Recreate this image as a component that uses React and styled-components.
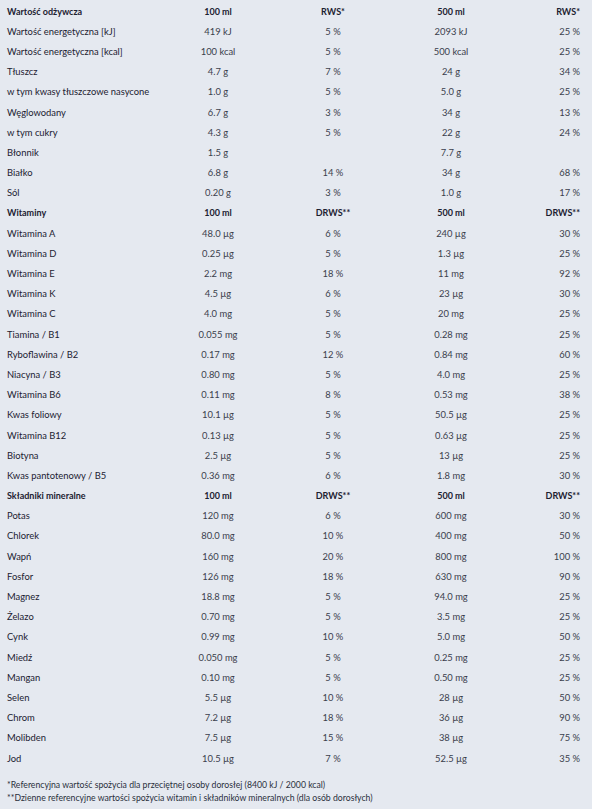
import styled, { createGlobalStyle } from "styled-components";

const GlobalStyle = createGlobalStyle`
  html, body {
    margin: 0;
    padding: 0;
    background: #e5e9f0;
  }
  body {
    font-family: "Lato", "Liberation Sans", sans-serif;
    color: #1c2130;
  }
`;

const sections = [
  {
    head: ["Wartość odżywcza", "100 ml", "RWS*", "500 ml", "RWS*"],
    rows: [
      ["Wartość energetyczna [kJ]", "419 kJ", "5 %", "2093 kJ", "25 %"],
      ["Wartość energetyczna [kcal]", "100 kcal", "5 %", "500 kcal", "25 %"],
      ["Tłuszcz", "4.7 g", "7 %", "24 g", "34 %"],
      ["w tym kwasy tłuszczowe nasycone", "1.0 g", "5 %", "5.0 g", "25 %"],
      ["Węglowodany", "6.7 g", "3 %", "34 g", "13 %"],
      ["w tym cukry", "4.3 g", "5 %", "22 g", "24 %"],
      ["Błonnik", "1.5 g", "", "7.7 g", ""],
      ["Białko", "6.8 g", "14 %", "34 g", "68 %"],
      ["Sól", "0.20 g", "3 %", "1.0 g", "17 %"],
    ],
  },
  {
    head: ["Witaminy", "100 ml", "DRWS**", "500 ml", "DRWS**"],
    rows: [
      ["Witamina A", "48.0 µg", "6 %", "240 µg", "30 %"],
      ["Witamina D", "0.25 µg", "5 %", "1.3 µg", "25 %"],
      ["Witamina E", "2.2 mg", "18 %", "11 mg", "92 %"],
      ["Witamina K", "4.5 µg", "6 %", "23 µg", "30 %"],
      ["Witamina C", "4.0 mg", "5 %", "20 mg", "25 %"],
      ["Tiamina / B1", "0.055 mg", "5 %", "0.28 mg", "25 %"],
      ["Ryboflawina / B2", "0.17 mg", "12 %", "0.84 mg", "60 %"],
      ["Niacyna / B3", "0.80 mg", "5 %", "4.0 mg", "25 %"],
      ["Witamina B6", "0.11 mg", "8 %", "0.53 mg", "38 %"],
      ["Kwas foliowy", "10.1 µg", "5 %", "50.5 µg", "25 %"],
      ["Witamina B12", "0.13 µg", "5 %", "0.63 µg", "25 %"],
      ["Biotyna", "2.5 µg", "5 %", "13 µg", "25 %"],
      ["Kwas pantotenowy / B5", "0.36 mg", "6 %", "1.8 mg", "30 %"],
    ],
  },
  {
    head: ["Składniki mineralne", "100 ml", "DRWS**", "500 ml", "DRWS**"],
    rows: [
      ["Potas", "120 mg", "6 %", "600 mg", "30 %"],
      ["Chlorek", "80.0 mg", "10 %", "400 mg", "50 %"],
      ["Wapń", "160 mg", "20 %", "800 mg", "100 %"],
      ["Fosfor", "126 mg", "18 %", "630 mg", "90 %"],
      ["Magnez", "18.8 mg", "5 %", "94.0 mg", "25 %"],
      ["Żelazo", "0.70 mg", "5 %", "3.5 mg", "25 %"],
      ["Cynk", "0.99 mg", "10 %", "5.0 mg", "50 %"],
      ["Miedź", "0.050 mg", "5 %", "0.25 mg", "25 %"],
      ["Mangan", "0.10 mg", "5 %", "0.50 mg", "25 %"],
      ["Selen", "5.5 µg", "10 %", "28 µg", "50 %"],
      ["Chrom", "7.2 µg", "18 %", "36 µg", "90 %"],
      ["Molibden", "7.5 µg", "15 %", "38 µg", "75 %"],
      ["Jod", "10.5 µg", "7 %", "52.5 µg", "35 %"],
    ],
  },
];

const Page = styled.div`
  padding: 1px 12px 0 7px;
`;

const Table = styled.div`
  display: flex;
  flex-direction: column;
`;

const Row = styled.div`
  display: grid;
  grid-template-columns: 161px 100px 130px 106px 1fr;
  align-items: center;
  height: 20.2px;
  font-size: ${({ head }) => (head ? "9px" : "9.4px")};
  font-weight: ${({ head }) => (head ? 700 : 400)};
`;

const Label = styled.span`
  color: #1c2130;
  white-space: nowrap;
`;

const Cell = styled.span`
  text-align: ${({ align }) => align || "center"};
  color: ${({ head }) => (head ? "#1c2130" : "#3a404c")};
  white-space: nowrap;
`;

const Notes = styled.div`
  margin-top: 10px;
  font-size: 8.7px;
  line-height: 13px;
  color: #2a303c;
`;

const DataRow = ({ cells, head }) => (
  <Row head={head}>
    <Label>{cells[0]}</Label>
    <Cell head={head}>{cells[1]}</Cell>
    <Cell head={head}>{cells[2]}</Cell>
    <Cell head={head}>{cells[3]}</Cell>
    <Cell head={head} align="right">{cells[4]}</Cell>
  </Row>
);

export default function App() {
  return (
    <>
      <GlobalStyle />
      <Page>
        <Table>
          {sections.map((s) => (
            <div key={s.head[0]}>
              <DataRow cells={s.head} head />
              {s.rows.map((r) => (
                <DataRow key={r[0]} cells={r} />
              ))}
            </div>
          ))}
        </Table>
        <Notes>
          <div>*Referencyjna wartość spożycia dla przeciętnej osoby dorosłej (8400 kJ / 2000 kcal)</div>
          <div>**Dzienne referencyjne wartości spożycia witamin i składników mineralnych (dla osób dorosłych)</div>
        </Notes>
      </Page>
    </>
  );
}
